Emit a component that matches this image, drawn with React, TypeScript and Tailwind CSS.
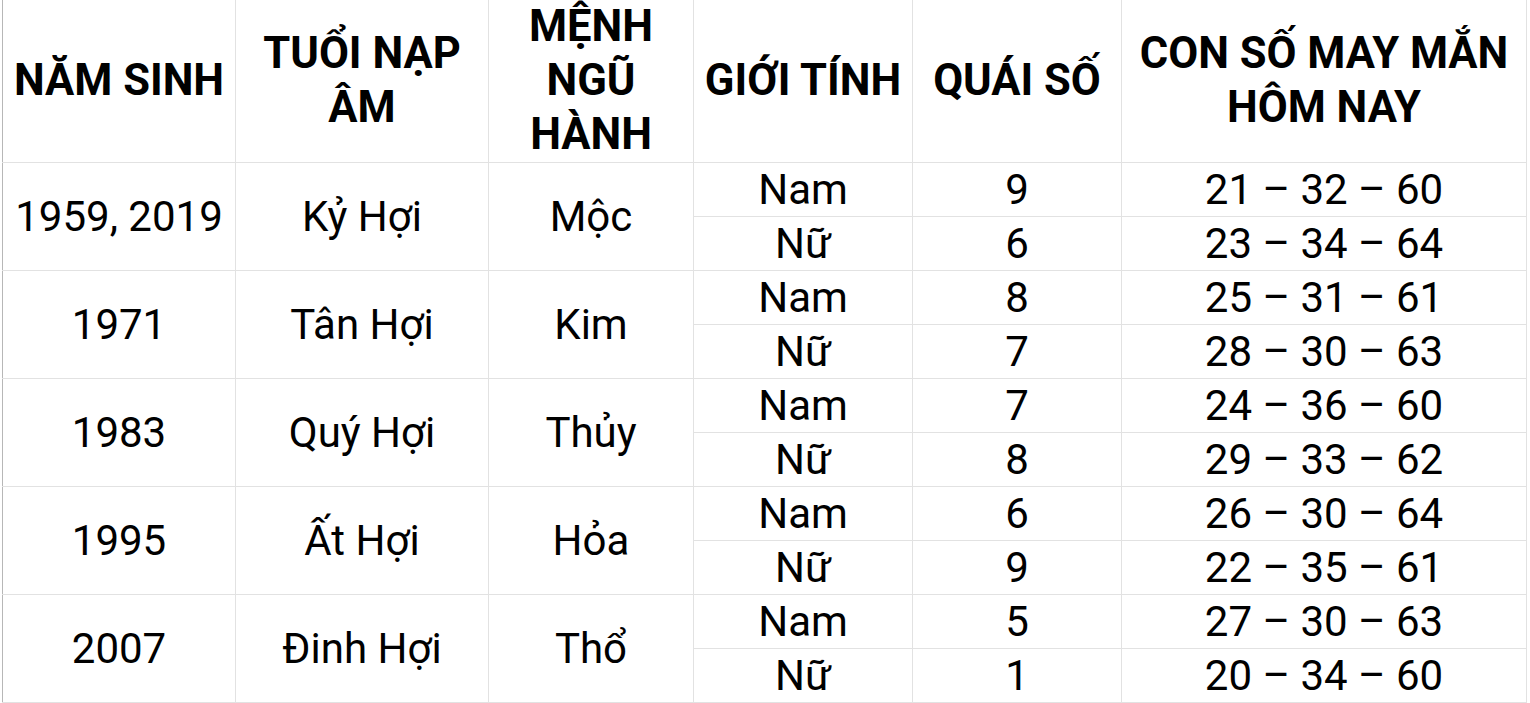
import React from "react";

const groups = [
  { year: "1959, 2019", tuoi: "Kỷ Hợi", menh: "Mộc", rows: [["Nam", "9", "21 – 32 – 60"], ["Nữ", "6", "23 – 34 – 64"]] },
  { year: "1971", tuoi: "Tân Hợi", menh: "Kim", rows: [["Nam", "8", "25 – 31 – 61"], ["Nữ", "7", "28 – 30 – 63"]] },
  { year: "1983", tuoi: "Quý Hợi", menh: "Thủy", rows: [["Nam", "7", "24 – 36 – 60"], ["Nữ", "8", "29 – 33 – 62"]] },
  { year: "1995", tuoi: "Ất Hợi", menh: "Hỏa", rows: [["Nam", "6", "26 – 30 – 64"], ["Nữ", "9", "22 – 35 – 61"]] },
  { year: "2007", tuoi: "Đinh Hợi", menh: "Thổ", rows: [["Nam", "5", "27 – 30 – 63"], ["Nữ", "1", "20 – 34 – 60"]] },
];

const cell = "border border-[#e2e2e2] text-center align-middle p-0";
const head = `${cell} border-t-0 font-bold text-[43.5px] leading-[54px]`;

export default function App() {
  return (
    <div className="w-[1530px] h-[703px] bg-white overflow-hidden text-black font-['Roboto',sans-serif]">
      <table className="ml-[2px] table-fixed border-collapse text-[42px] leading-[50px]">
        <colgroup>
          <col className="w-[233px]" />
          <col className="w-[253px]" />
          <col className="w-[205px]" />
          <col className="w-[219px]" />
          <col className="w-[209px]" />
          <col className="w-[405px]" />
        </colgroup>
        <thead>
          <tr className="h-[162px]">
            <th className={`${head} border-l-[#b7b7b7]`}>NĂM SINH</th>
            <th className={head}>TUỔI NẠP<br />ÂM</th>
            <th className={head}>MỆNH<br />NGŨ<br />HÀNH</th>
            <th className={head}>GIỚI TÍNH</th>
            <th className={head}>QUÁI SỐ</th>
            <th className={head}>CON SỐ MAY MẮN<br />HÔM NAY</th>
          </tr>
        </thead>
        <tbody>
          {groups.map((g) =>
            g.rows.map((r, i) => (
              <tr key={g.year + i} className="h-[54px]">
                {i === 0 && (
                  <>
                    <td rowSpan={2} className={`${cell} border-l-[#b7b7b7]`}>{g.year}</td>
                    <td rowSpan={2} className={cell}>{g.tuoi}</td>
                    <td rowSpan={2} className={cell}>{g.menh}</td>
                  </>
                )}
                <td className={cell}>{r[0]}</td>
                <td className={cell}>{r[1]}</td>
                <td className={cell}>{r[2]}</td>
              </tr>
            ))
          )}
        </tbody>
      </table>
    </div>
  );
}
